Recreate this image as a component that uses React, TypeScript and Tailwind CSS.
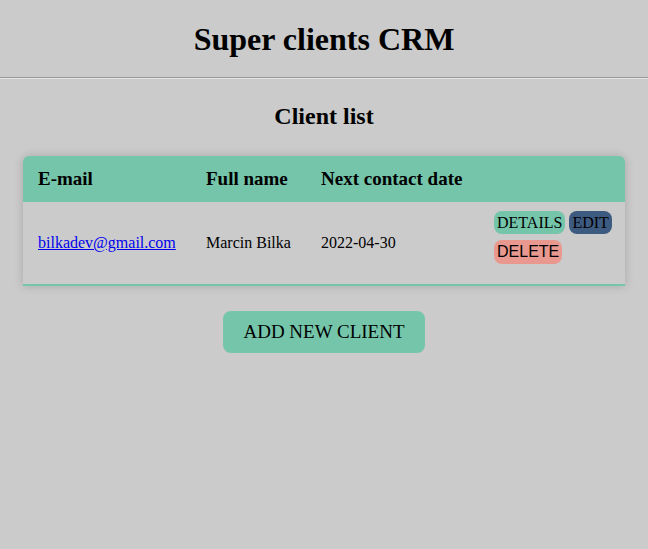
import React from "react";

const serif = { fontFamily: '"Liberation Serif", "Times New Roman", serif' };

export default function App() {
  return (
    <div className="min-h-[549px] w-full bg-[#cbcbcb] text-black" style={serif}>
      <header className="flex h-[77px] items-center justify-center">
        <h1 className="text-[32px] font-bold leading-[36px]">Super clients CRM</h1>
      </header>
      <div className="h-[2px] border-t border-b border-t-[#9c9c9c] border-b-[#e4e4e4]" />
      <h2 className="mt-[24px] text-center text-[24px] font-bold leading-[27px]">Client list</h2>
      <div className="mx-[23px] mt-[26px] overflow-hidden rounded-t-[6px] border-b-2 border-[#74c5aa] shadow-[0_0_10px_rgba(0,0,0,0.18)]">
        <div className="grid h-[46px] grid-cols-[168px_115px_173px_1fr] items-center bg-[#74c5aa] text-[19px] font-bold">
          <div className="px-[15px]">E-mail</div>
          <div className="px-[15px]">Full name</div>
          <div className="px-[15px]">Next contact date</div>
          <div className="px-[15px]"></div>
        </div>
        <div className="grid h-[82px] grid-cols-[168px_115px_173px_1fr] items-center bg-[#cbcbcb] text-[16px]">
          <div className="px-[15px]">
            <a href="#" className="text-[#0000ee] underline">bilkadev@gmail.com</a>
          </div>
          <div className="px-[15px]">Marcin Bilka</div>
          <div className="px-[15px]">2022-04-30</div>
          <div className="flex flex-col gap-[6px] self-start px-[15px] pt-[9px]">
            <div className="flex gap-[4px]">
              <button className="h-[23px] rounded-[8px] bg-[#74c5aa] px-[3px] text-[16px] leading-[23px]" style={serif}>DETAILS</button>
              <button className="h-[23px] rounded-[8px] bg-[#3d5a80] px-[3px] text-[16px] leading-[23px]" style={serif}>EDIT</button>
            </div>
            <div className="flex">
              <button className="h-[24px] rounded-[8px] bg-[#e8988e] px-[3px] text-[16px] leading-[24px]" style={{ fontFamily: '"Liberation Sans", Arial, sans-serif' }}>DELETE</button>
            </div>
          </div>
        </div>
      </div>
      <div className="mt-[25px] flex justify-center">
        <button className="h-[42px] rounded-[8px] bg-[#74c5aa] px-[20px] text-[19px]" style={serif}>ADD NEW CLIENT</button>
      </div>
    </div>
  );
}
